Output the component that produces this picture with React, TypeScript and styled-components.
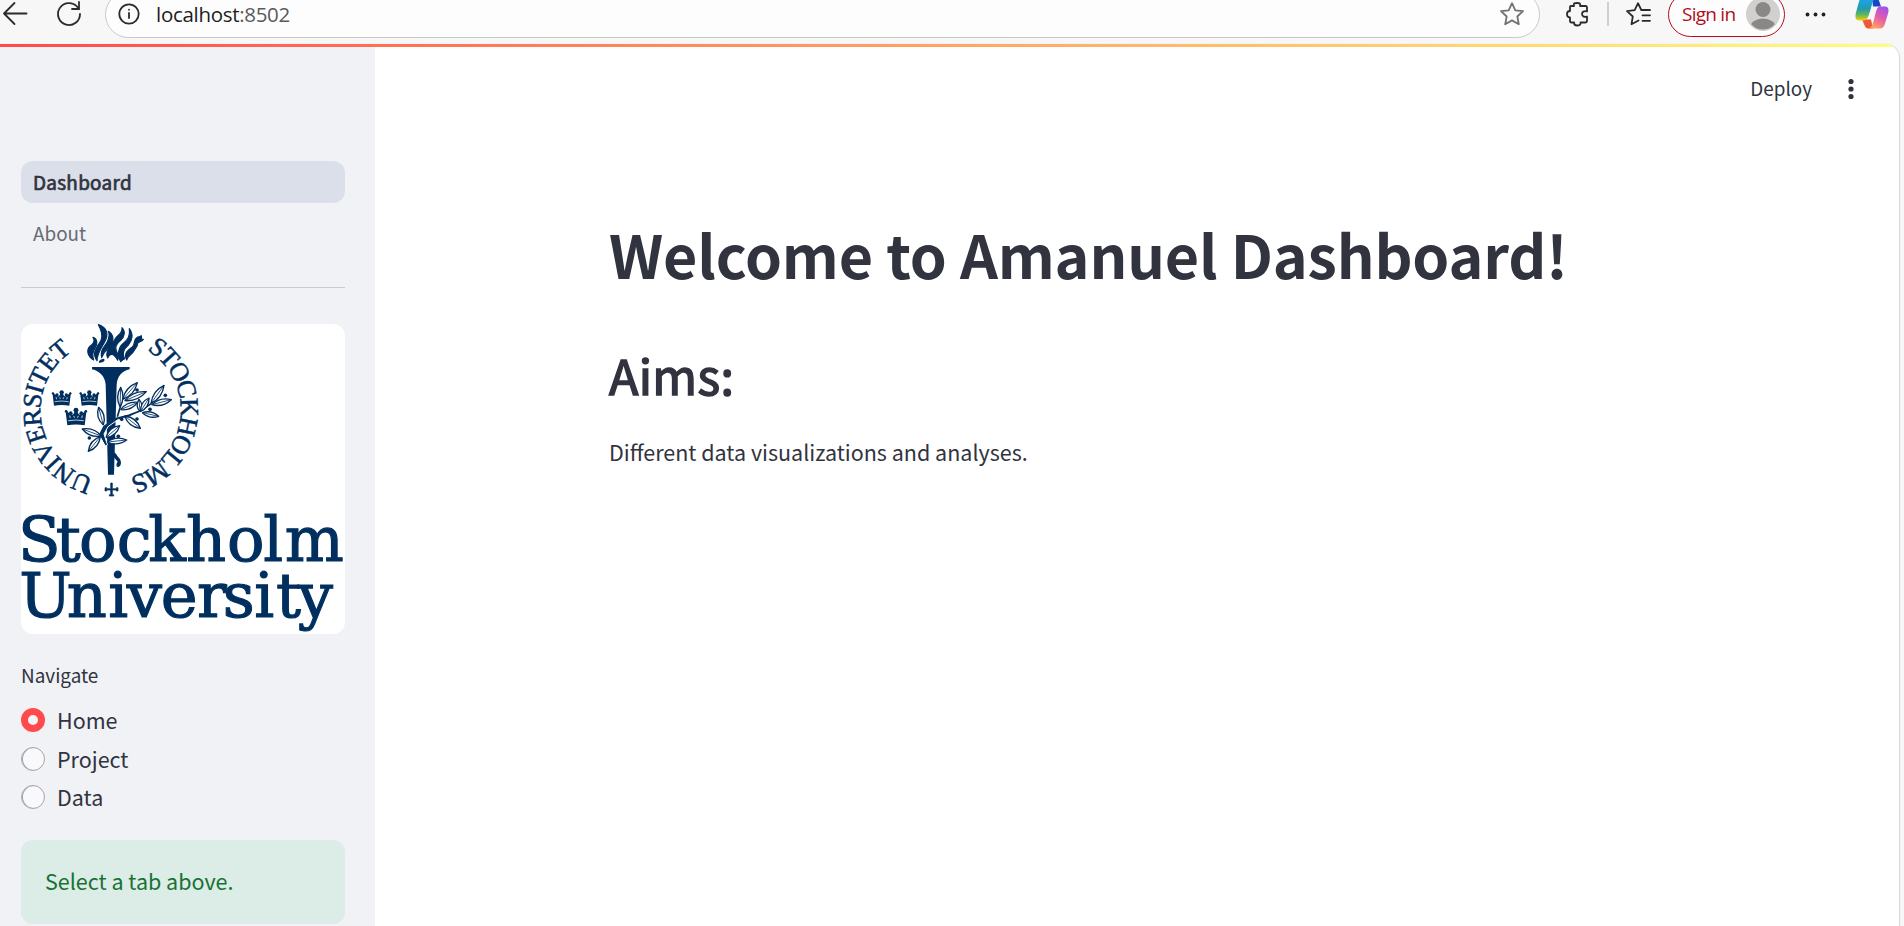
import React from "react";
import styled, { createGlobalStyle } from "styled-components";

const GlobalStyle = createGlobalStyle`
  * { box-sizing: border-box; }
  html, body { margin: 0; height: 100%; overflow: hidden; background: #f7f7f7; }
  body {
    color: #31333f;
    font-family: "Noto Sans CJK SC", "Open Sans", sans-serif;
  }
`;

const Window = styled.div`
  width: 1904px;
  height: 926px;
  overflow: hidden;
  display: flex;
  flex-direction: column;
`;

/* Browser toolbar */
const Toolbar = styled.header`
  height: 44px;
  flex: none;
  overflow: hidden;
`;
const ToolbarRow = styled.div`
  height: 28px;
  display: flex;
  align-items: center;
`;
const Glyph = styled.svg<{ $left?: number; $color?: string }>`
  display: block;
  flex: none;
  overflow: visible;
  fill: none;
  stroke: ${(p) => p.$color ?? "#2b2b2b"};
  stroke-width: 1.8;
  stroke-linecap: round;
  stroke-linejoin: round;
  margin-left: ${(p) => p.$left ?? 0}px;
`;
const AddressBar = styled.div`
  width: 1435px;
  height: 47px;
  margin-left: 23px;
  padding: 0 15px 0 12px;
  flex: none;
  display: flex;
  align-items: center;
  border: 1.5px solid #c9c9c9;
  border-radius: 24px;
  background: #fdfdfd;
`;
const Url = styled.span`
  flex: 1;
  margin-left: 16px;
  font: 20.5px/28px "Open Sans", "Noto Sans", sans-serif;
  letter-spacing: -0.3px;
  color: #5a5a5a;
  b { font-weight: 400; color: #1c1c1c; }
`;
const Divider = styled.span`
  width: 2px;
  height: 24px;
  margin-left: 19px;
  background: #cfcfcf;
`;
const SignIn = styled.div`
  width: 117px;
  height: 45px;
  margin-left: 16px;
  padding: 0 4px 0 13px;
  flex: none;
  display: flex;
  align-items: center;
  justify-content: space-between;
  border: 1.5px solid #b10e1c;
  border-radius: 23px;
  background: #fdfdfd;
  color: #b10e1c;
  font: 19px/28px "Open Sans", "Noto Sans", sans-serif;
  letter-spacing: -0.75px;
  white-space: nowrap;
`;

/* Page */
const Page = styled.div`
  position: relative;
  width: 1899px;
  height: 882px;
  display: flex;
  background: #fff;
  border-radius: 0 14px 0 0;
  overflow: hidden;
  box-shadow: 1px 0 1px #d5d5d5;
`;
const Decoration = styled.div`
  position: absolute;
  inset: 0 0 auto 0;
  height: 3px;
  background: linear-gradient(90deg, #ff4b4b, #fffd80);
`;
const Sidebar = styled.aside`
  width: 375px;
  flex: none;
  padding: 117px 30px 0 21px;
  background: #f0f2f6;
`;
const Nav = styled.nav`
  display: flex;
  flex-direction: column;
  gap: 9px;
`;
const NavItem = styled.a<{ $active?: boolean }>`
  height: 42px;
  padding-left: 12px;
  border-radius: 12px;
  background: ${(p) => (p.$active ? "#dbdfea" : "transparent")};
  color: ${(p) => (p.$active ? "#31333f" : "#686a74")};
  font-size: 18.9px;
  line-height: 41px;
  letter-spacing: ${(p) => (p.$active ? 0.3 : 0)}px;
  -webkit-text-stroke: ${(p) => (p.$active ? "0.7px #31333f" : "0")};
`;
const Rule = styled.hr`
  margin: 33px 0 36px;
  border: 0;
  height: 1px;
  background: #c9cbd1;
`;
const Logo = styled.svg`
  display: block;
  width: 324px;
  height: 310px;
  border-radius: 12px;
  background: #fff;
`;
const FieldLabel = styled.div`
  margin-top: 26px;
  font-size: 18.9px;
  line-height: 29px;
`;
const Options = styled.div`
  margin-top: 12px;
  display: flex;
  flex-direction: column;
`;
const Option = styled.label`
  height: 38.5px;
  display: flex;
  align-items: center;
  gap: 12px;
  font-size: 21.5px;
  line-height: 36px;
`;
const Radio = styled.span<{ $on?: boolean }>`
  width: 24px;
  height: 24px;
  border-radius: 50%;
  border: ${(p) => (p.$on ? "7.5px solid #ff4b4b" : "1.5px solid #a3a5ac")};
  background: ${(p) => (p.$on ? "#f4f4f8" : "#f9f9fb")};
  box-shadow: ${(p) => (p.$on ? "none" : "inset 1px 0 0 #a3a5ac")};
`;
const Alert = styled.div`
  height: 84px;
  margin-top: 23px;
  padding-left: 24px;
  border-radius: 12px;
  background: #dcece6;
  color: #177233;
  font-size: 21.5px;
  line-height: 81px;
`;
const Main = styled.main`
  flex: 1;
  display: flex;
  flex-direction: column;
`;
const AppHeader = styled.div`
  height: 90px;
  padding-right: 45px;
  display: flex;
  align-items: center;
  justify-content: flex-end;
  gap: 36px;
`;
const DeployButton = styled.span`
  padding-bottom: 3px;
  font-size: 18.9px;
  line-height: 28px;
`;
const Content = styled.div`
  padding: 83px 0 0 234px;
`;
const Title = styled.h1`
  margin: 0;
  font-size: 59.2px;
  line-height: 72px;
  font-weight: 700;
  letter-spacing: -0.17px;
  white-space: nowrap;
`;
const Heading = styled.h2`
  margin: 55px 0 0;
  font-size: 48.4px;
  line-height: 60px;
  font-weight: 400;
  letter-spacing: 0.3px;
  -webkit-text-stroke: 1.5px #31333f;
`;
const Text = styled.p`
  margin: 30px 0 0;
  font-size: 21.5px;
  line-height: 36px;
`;

const NAVY = "#002f5f";

/* A pointed leaf from its base (x1, y1) to its tip (x2, y2), w controlling its breadth. */
function leaf([x1, y1, x2, y2, w]: number[]) {
  const dx = x2 - x1;
  const dy = y2 - y1;
  const l = Math.hypot(dx, dy);
  const nx = (-dy / l) * w;
  const ny = (dx / l) * w;
  const mx = (x1 + x2) / 2;
  const my = (y1 + y2) / 2;
  return `M${x1} ${y1}Q${mx + nx} ${my + ny} ${x2} ${y2}Q${mx - nx} ${my - ny} ${x1} ${y1}`;
}

const LEAVES = [
  [360, 290, 362, 232, 16], [368, 268, 412, 218, 18], [374, 272, 439, 245, 18],
  [362, 299, 413, 277, 16], [420, 305, 417, 268, 14], [422, 304, 447, 264, 16],
  [453, 280, 492, 226, 18], [455, 284, 514, 269, 17], [427, 308, 476, 319, 15],
  [374, 318, 421, 355, 19], [310, 345, 296, 292, 18], [304, 378, 247, 357, 18],
  [301, 380, 265, 424, 18], [318, 383, 359, 347, 18], [322, 396, 380, 390, 17],
];
const BERRIES = [[411, 240], [496, 256], [365, 328], [268, 384], [355, 379], [450, 298], [411, 327]];

function Crown({ x, y, s = 1 }: { x: number; y: number; s?: number }) {
  return (
    <g transform={`translate(${x} ${y}) scale(${s})`}>
      <path d="M-28-18L-15-8Q-10-3-6-9L-4-14H4L6-9Q10-3 15-8L28-18L23 22Q0 18-23 22Z" />
      <circle cy="-18" r="6.5" />
      <circle cx="-14" cy="-10" r="5" />
      <circle cx="14" cy="-10" r="5" />
      <circle cx="-26" cy="-15" r="3.500" />
      <circle cx="26" cy="-15" r="3.500" />
      <path d="M-21 10Q0 6 21 10" fill="none" stroke="#fff" strokeWidth="2" />
      <path d="M-17-4L-15 3M17-4L15 3M-6-3L-4 2M6-3L4 2" fill="none" stroke="#fff" strokeWidth="2" />
    </g>
  );
}

function UniversityLogo() {
  return (
    <Logo viewBox="63 42 972 930" fill={NAVY}>
      <defs>
        <path id="ringRight" d="M440.6 120.3A210 210 0 0 1 386.4 502.8" />
        <path id="ringLeft" d="M281 503.8A210 210 0 0 1 217.6 123.9" />
      </defs>
      <g fontFamily="Liberation Serif, serif" fontSize="79" stroke={NAVY} strokeWidth="1.5">
        <text>
          <textPath href="#ringRight" textLength="488">STOCKHOLMS</textPath>
        </text>
        <text>
          <textPath href="#ringLeft" textLength="486">UNIVERSITET</textPath>
        </text>
      </g>
      <path d="M332 519h5v17h12v-3h5v10h-5v-3h-12v14h4v4h-13v-4h4v-14h-12v3h-5v-10h5v3h12z" stroke={NAVY} strokeWidth="2" />
      {/* flame */}
      <g stroke={NAVY} strokeWidth="3.500" strokeLinejoin="round">
        <path d="M281 150C262 139 258 119 271 108C282 100 285 91 279 82C293 87 293 101 286 112C279 123 276 134 281 150Z" />
        <path d="M291 152C272 126 295 108 303 91C309 76 303 58 295 44C317 51 326 68 318 87C311 105 292 125 291 152Z" />
        <path d="M305 143C299 119 315 109 322 95C328 82 329 73 325 64C340 72 343 91 334 106C325 119 311 121 305 143Z" />
        <path d="M323 144C313 122 334 111 343 91C351 72 368 74 366 53C377 64 374 80 362 91C348 102 345 111 349 122C353 132 358 139 353 151C342 130 330 128 323 144Z" />
        <path d="M362 155C349 132 357 110 371 99C384 89 391 77 388 56C401 72 397 91 385 105C371 117 365 130 374 146Q367 150 362 155Z" />
        <path d="M380 150C370 130 384 120 396 112C407 103 400 88 410 83C415 79 421 82 424 77C426 84 421 88 430 88C424 97 415 93 412 102C414 109 406 114 402 122C396 134 384 137 380 150Z" />
        <path d="M311 148C301 150 299 153 298 156C302 158 316 152 311 148Z" />
      </g>
      {/* torch */}
      <path d="M276 171H389V178C365 183 352 199 350 224L342 494H324L317 224C315 199 299 183 276 178Z" />
      <path d="M337 426C349 426 350 438 359 446C366 456 363 470 354 471C347 470 349 460 353 455L341 441Z" />
      <Crown x={185} y={265} />
      <Crown x={268} y={265} />
      <Crown x={228} y={321} s={1.13} />
      {/* olive branch */}
      <path d="M299 375L312 350L345 326L386 316L420 303L388 321L352 330L324 350L312 372L322 404L313 402Z" stroke="#fff" strokeWidth="3" />
      <path d="M299 375L312 350L345 326L386 316L420 303L455 280M304 378L319 405M352 320L366 274" fill="none" stroke={NAVY} strokeWidth="5" />
      {LEAVES.map((l, i) => (
        <g key={i} stroke={NAVY} strokeWidth="4" strokeLinejoin="round">
          <path d={leaf(l)} fill="#fff" />
          <path d={`M${l[0]} ${l[1]}L${l[2]} ${l[3]}`} strokeWidth="2.500" />
        </g>
      ))}
      {BERRIES.map(([x, y]) => (
        <circle key={`${x}-${y}`} cx={x} cy={y} r="5.500" />
      ))}
      <g fontFamily="DejaVu Serif, serif" fontSize="187" stroke={NAVY} strokeWidth="3.500">
        <text x="54 167 237 350 445 558 681 790 854" y="752">Stockholm</text>
        <text x="58 200 325 380 482 591 668 763 828 893" y="920">University</text>
      </g>
    </Logo>
  );
}

const STAR = "M12 1.2L15.3 8.3L23 9.2L17.3 14.5L18.8 22.2L12 18.4L5.2 22.2L6.7 14.5L1 9.2L8.7 8.3Z";

function CopilotMark() {
  return (
    <Glyph $left={28} $color="none" width="34" height="34" viewBox="0 0 34 34">
      <defs>
        <linearGradient id="cpA" x1="0" y1="0" x2="0" y2="1">
          <stop offset="0" stopColor="#18a9f5" />
          <stop offset="0.5" stopColor="#2499b5" />
          <stop offset="0.75" stopColor="#5cb65c" />
          <stop offset="1" stopColor="#f5d20a" />
        </linearGradient>
        <linearGradient id="cpB" x1="0.8" y1="0" x2="0.3" y2="1">
          <stop offset="0" stopColor="#9d50ef" />
          <stop offset="0.5" stopColor="#e55caa" />
          <stop offset="1" stopColor="#ffa35c" />
        </linearGradient>
      </defs>
      <g transform="translate(0 -0.500)">
        <path d="M17 0H20C23 0 24 4 25 7L26 10H18Z" fill="#1746c7" />
        <path d="M7 23H16L18 32H13C10 32 9 27 7 23Z" fill="#ee5937" />
        <path d="M9 0H21C18 3 17 8 15 15C13 21 12 24 8 24H4C0 24 0 20 1 16L4 5C5 2 6 0 9 0Z" fill="url(#cpA)" />
        <path d="M26 10H30C34 10 34 14 33 17L30 27C29 31 27 32 25 32H14C17 31 18 27 20 19C22 12 22 10 26 10Z" fill="url(#cpB)" />
      </g>
    </Glyph>
  );
}

export default function App() {
  return (
    <Window>
      <GlobalStyle />
      <Toolbar>
        <ToolbarRow>
          <Glyph $left={3} width="24" height="22" viewBox="0 0 24 22">
            <path d="M1 10.5H23.5M11.5 0L1 10.5L11.5 21" />
          </Glyph>
          <Glyph $left={30} width="25" height="24" viewBox="0 0 25 24">
            <path d="M23 12A11 11 0 1 1 20 4.5L22 7M22 0V7H15" strokeLinejoin="miter" />
          </Glyph>
          <AddressBar>
            <Glyph width="22" height="22" viewBox="0 0 22 22">
              <circle cx="11" cy="11" r="9.7" />
              <path d="M11 10V15M11 6.7V6.8" />
            </Glyph>
            <Url><b>localhost</b>:8502</Url>
            <Glyph $color="#727272" width="24" height="24" viewBox="0 0 24 24">
              <path d={STAR} />
            </Glyph>
          </AddressBar>
          <Glyph $left={26} width="22" height="24" viewBox="0 0 22 24">
            <path d="M4 5Q4 4 5 4H8C7 1 9 1 11 1C13 1 15 1 14 4H19.5Q21 4 21 5.5V9.5C18 8.5 16 10 16 12C16 14 18 15.5 21 14.5V19Q21 20.5 19.5 20.5H14.5C15 23 13 23.5 11 23.5C9 23.5 8 23 8 20.5H5.5Q4 20.5 4 19V15.5C1.5 15.5 1 14 1 12.3C1 10.5 1.5 9 4 9Z" />
          </Glyph>
          <Divider />
          <Glyph $left={17} width="26" height="24" viewBox="0 0 26 24">
            <path d="M12.5 18.5L5.5 22.2L6.800 14.5L1 9.2L8.700 8.2L12 1.2L15.3 8H24M16.5 13.3H24M16.5 18.8H24" />
          </Glyph>
          <SignIn>
            Sign in
            <Glyph $color="none" width="34" height="34" viewBox="0 0 34 34">
              <clipPath id="avatar"><circle cx="17" cy="17" r="15.500" /></clipPath>
              <circle cx="17" cy="17" r="17" fill="#d2d0ce" />
              <circle cx="17" cy="12.500" r="7.500" fill="#8a8886" />
              <ellipse cx="17" cy="31" rx="13" ry="9.500" fill="#8a8886" clipPath="url(#avatar)" />
            </Glyph>
          </SignIn>
          <Glyph $left={20} $color="none" width="22" height="6" viewBox="0 0 22 6">
            <g fill="#202020">
              <circle cx="2.500" cy="3.500" r="1.900" />
              <circle cx="10.500" cy="3.500" r="1.900" />
              <circle cx="18.500" cy="3.500" r="1.900" />
            </g>
          </Glyph>
          <CopilotMark />
        </ToolbarRow>
      </Toolbar>
      <Page>
        <Sidebar>
          <Nav>
            <NavItem $active>Dashboard</NavItem>
            <NavItem>About</NavItem>
          </Nav>
          <Rule />
          <UniversityLogo />
          <FieldLabel>Navigate</FieldLabel>
          <Options>
            <Option><Radio $on />Home</Option>
            <Option><Radio />Project</Option>
            <Option><Radio />Data</Option>
          </Options>
          <Alert>Select a tab above.</Alert>
        </Sidebar>
        <Main>
          <AppHeader>
            <DeployButton>Deploy</DeployButton>
            <Glyph $color="none" width="6" height="22" viewBox="0 0 6 22">
              <g fill="#31333f">
                <circle cx="3" cy="3.500" r="2.600" />
                <circle cx="3" cy="11" r="2.600" />
                <circle cx="3" cy="18.500" r="2.600" />
              </g>
            </Glyph>
          </AppHeader>
          <Content>
            <Title>Welcome to Amanuel Dashboard!</Title>
            <Heading>Aims:</Heading>
            <Text>Different data visualizations and analyses.</Text>
          </Content>
        </Main>
        <Decoration />
      </Page>
    </Window>
  );
}
